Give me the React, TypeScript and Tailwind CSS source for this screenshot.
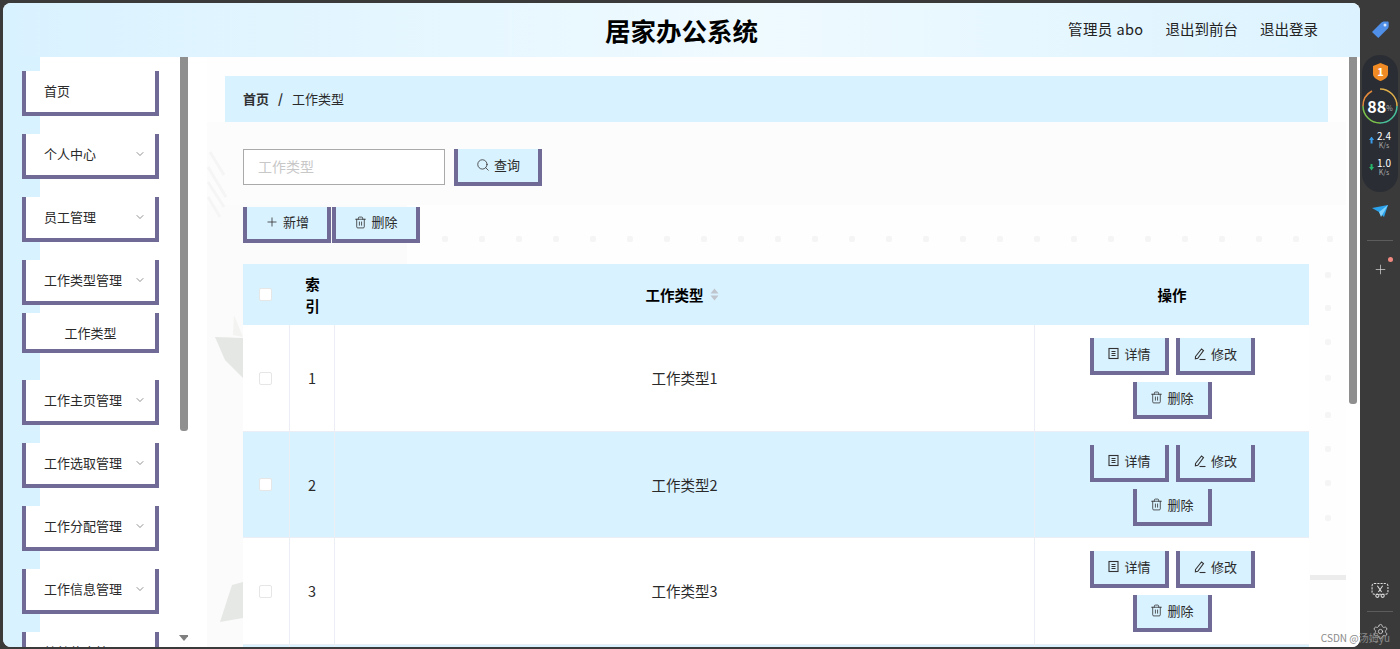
import React from "react";
import { ChevronDown, Plus, Search, Settings, Trash2 } from "lucide-react";

function Tickets() {
  return (
    <svg width="13" height="13" viewBox="0 0 13 13" fill="none" stroke="#333" strokeWidth="1.1">
      <rect x="2" y="1.5" width="9" height="10" />
      <path d="M4.500 4.500h4M4.500 6.500h4M4.500 8.500h4" />
    </svg>
  );
}
function Pencil() {
  return (
    <svg width="14" height="14" viewBox="0 0 14 14" fill="none" stroke="#333" strokeWidth="1.1">
      <path d="M2.500 9.500 8.500 2l2 1.700L4.800 11.300l-2.400.6z" />
      <path d="M6.500 12.500h6" />
    </svg>
  );
}

function ActionButton({ icon, label, className = "w-[79px]" }: { icon: React.ReactNode; label: string; className?: string }) {
  return (
    <button className={`${className} h-[37px] pb-[2px] flex items-center justify-center gap-[4px] bg-[#d9f2ff] border-x-4 border-b-4 border-[#6f6b96] text-[13px] text-[#2a2a2a]`}>
      {icon}
      <span>{label}</span>
    </button>
  );
}

const navItems = [
  { label: "首页", mt: "mt-0", arrow: false },
  { label: "个人中心", mt: "mt-[18px]", arrow: true },
  { label: "员工管理", mt: "mt-[18px]", arrow: true },
  { label: "工作类型管理", mt: "mt-[18px]", arrow: true, sub: "工作类型" },
  { label: "工作主页管理", mt: "mt-[27px]", arrow: true },
  { label: "工作选取管理", mt: "mt-[18px]", arrow: true },
  { label: "工作分配管理", mt: "mt-[18px]", arrow: true },
  { label: "工作信息管理", mt: "mt-[18px]", arrow: true },
  { label: "绩效信息管理", mt: "mt-[18px]", arrow: true },
];

function Sidebar() {
  return (
    <aside className="w-[185px] h-full shrink-0 flex overflow-hidden bg-[linear-gradient(90deg,#d9f2ff_37px,#ffffff_37px)]">
      <nav className="w-[177px] shrink-0 pt-[14px] pl-[19px]">
        {navItems.map((item) => (
          <div key={item.label} className={item.mt}>
            <div className="w-[137px] h-[45px] pb-[2px] flex items-center justify-between bg-white border-x-4 border-b-4 border-[#6f6b96] pl-[18px] pr-[9px] text-[13px] text-[#2a2a2a]">
              <span>{item.label}</span>
              {item.arrow && <ChevronDown size={12} strokeWidth={1.3} color="#555" />}
            </div>
            {item.sub && (
              <div className="mt-[8px] w-[137px] h-[40px] pt-[4px] flex items-center justify-center bg-white border-x-4 border-b-4 border-[#6f6b96] text-[13px] text-[#2a2a2a]">
                {item.sub}
              </div>
            )}
          </div>
        ))}
      </nav>
      <div className="w-[8px] h-full flex flex-col items-center justify-between bg-white">
        <div className="w-[8px] h-[374px] rounded-b-[3px] bg-[#8f8f8f]" />
        <div className="mb-[6px] w-0 h-0 border-x-[5px] border-t-[6px] border-x-transparent border-t-[#7f7f7f]" />
      </div>
    </aside>
  );
}

function Backdrop() {
  const dotsX = [257, 294, 331, 368, 405, 442, 479, 516, 553, 590, 627, 664, 701, 738, 775, 812, 849, 886, 923, 960, 997, 1034, 1071, 1108, 1142];
  const dotsY = [218, 251, 285, 321, 358, 392, 426, 461];
  return (
    <svg className="absolute inset-0 pointer-events-none" width="1161" height="590" viewBox="0 0 1161 590">
      <rect x="19" y="0" width="1139" height="590" fill="#fefefe" />
      <rect x="19" y="65" width="1139" height="83" fill="#fcfcfc" />
      <rect x="19" y="148" width="200" height="60" fill="#fbfbfb" />
      <rect x="19" y="208" width="36" height="382" fill="#fbfbfb" />
      <path d="M22 95 36 118M20 110 38 140M20 125 36 150M20 140 32 160" stroke="#f5f5f5" strokeWidth="3" fill="none" />
      {dotsX.map((x) => (
        <rect key={x} x={x - 3} y={179} width="6" height="6" rx="2" fill="#f5f5f5" />
      ))}
      {dotsY.map((y) => (
        <rect key={y} x={1137} y={y - 3} width="6" height="6" rx="2" fill="#f5f5f5" />
      ))}
      <path d="M46 258 55 280 45 278z" fill="#f3f3f1" />
      <path d="M27 280 55 281 55 321 37 303z" fill="#e4e7e3" />
      <path d="M32 565 55 561 55 525 44 528z" fill="#e6e8e5" />
      <rect x="1122" y="518" width="36" height="5" fill="#ececec" />
    </svg>
  );
}

function Main() {
  const rows = [1, 2, 3, 4];
  return (
    <main className="relative flex-1 h-full overflow-hidden bg-white">
      <Backdrop />
      <div className="relative pt-[19px] pl-[37px]">
        <div className="w-[1103px] h-[46px] pb-[1px] flex items-center gap-[9px] pl-[18px] bg-[#d9f2ff] text-[13px]">
          <span className="font-bold text-[#303133]">首页</span>
          <span className="font-bold text-[#303133]">/</span>
          <span className="text-[#2a2a2a]">工作类型</span>
        </div>
        <div className="pl-[18px]">
          <div className="mt-[27px] flex items-start gap-[9px]">
            <div className="w-[202px] h-[36px] pb-[2px] flex items-center pl-[14px] bg-white border border-[#aaaaaa] text-[14px] text-[#c8c8c8]">
              工作类型
            </div>
            <ActionButton className="w-[88px]" icon={<Search size={14} strokeWidth={1.4} color="#333" />} label="查询" />
          </div>
          <div className="mt-[21px] flex gap-px">
            <ActionButton className="w-[88px] !h-[36px]" icon={<Plus size={14} strokeWidth={1.4} color="#333" />} label="新增" />
            <ActionButton className="w-[88px] !h-[36px]" icon={<Trash2 size={13} strokeWidth={1.5} color="#333" />} label="删除" />
          </div>
          <table className="mt-[21px] w-[1066px] table-fixed border-separate border-spacing-0 bg-white text-[14.5px] text-[#2a2a2a]">
            <colgroup>
              <col className="w-[47px]" />
              <col className="w-[45px]" />
              <col className="w-[700px]" />
              <col className="w-[274px]" />
            </colgroup>
            <thead>
              <tr className="h-[61px] bg-[#d9f2ff] text-black">
                <th className="font-normal pr-[2px]">
                  <span className="block mx-auto w-[13px] h-[13px] rounded-[2px] bg-white border border-[#e6e6e6]" />
                </th>
                <th className="font-bold leading-[22px] px-[14px]">索引</th>
                <th className="font-bold">
                  <span className="inline-flex items-center gap-[6px] pr-[6px]">
                    工作类型
                    <svg width="9" height="13" viewBox="0 0 9 13" fill="#c0c4cc">
                      <path d="M4.500 0.500 8.500 5.500H.5zM4.500 12.500.5 7.500h8z" />
                    </svg>
                  </span>
                </th>
                <th className="font-bold">操作</th>
              </tr>
            </thead>
            <tbody>
              {rows.map((n) => (
                <tr key={n} className={n % 2 === 0 ? "bg-[#d9f2ff] h-[106px]" : "bg-white h-[107px]"}>
                  <td className="border-r border-b border-[#ebeef5] pr-[2px]">
                    <span className="block mx-auto w-[13px] h-[13px] rounded-[2px] bg-white border border-[#e6e6e6]" />
                  </td>
                  <td className="border-r border-b border-[#ebeef5] text-center">{n}</td>
                  <td className="border-r border-b border-[#ebeef5] text-center">工作类型{n}</td>
                  <td className="border-b border-[#ebeef5] align-top pt-[13px]">
                    <div className="flex flex-wrap justify-center gap-x-[7px] gap-y-[7px] px-[40px]">
                      <ActionButton icon={<Tickets />} label="详情" />
                      <ActionButton icon={<Pencil />} label="修改" />
                      <ActionButton icon={<Trash2 size={13} strokeWidth={1.5} color="#333" />} label="删除" />
                    </div>
                  </td>
                </tr>
              ))}
            </tbody>
          </table>
        </div>
      </div>
      <div className="absolute right-[3px] top-0 w-[8px] h-[347px] rounded-b-[3px] bg-[#8f8f8f]" />
    </main>
  );
}

function Dock() {
  return (
    <div className="flex-1 h-full flex flex-col items-center text-white">
      <svg className="mt-[18px]" width="18" height="18" viewBox="0 0 18 18">
        <path d="M1 11 10 2c1-1 2-1.500 3.500-1.500h3c.8 0 1.200.5 1.200 1.200v3c0 1.400-.4 2.400-1.400 3.400l-9 9z" fill="#4f8fe8" />
        <circle cx="14" cy="4" r="1.500" fill="#dbe9ff" />
      </svg>
      <div className="mt-[16px] w-[36px] h-[137px] rounded-[18px] bg-[#2a2d33] flex flex-col items-center">
        <svg className="mt-[8px]" width="15" height="18" viewBox="0 0 15 18">
          <path d="M7.500 0 15 3v8c0 3.500-3.500 5.500-7.500 7C3.500 16.500 0 14.500 0 11V3z" fill="#f08a24" />
          <text x="7.500" y="13" textAnchor="middle" fontSize="11" fontWeight="700" fill="#fff">1</text>
        </svg>
        <div className="relative mt-[7px] w-[36px] h-[36px]">
          <svg width="36" height="36" viewBox="0 0 36 36" fill="none" strokeWidth="1.500">
            <path d="M18 1a17 17 0 0 1 17 17" stroke="#e2b04a" />
            <path d="M35 18a17 17 0 0 1-17 17" stroke="#49c19a" />
            <path d="M18 35A17 17 0 0 1 1 18" stroke="#7bc24d" />
            <path d="M1 18A17 17 0 0 1 10 3" stroke="#e58a3a" />
          </svg>
          <div className="absolute inset-0 flex items-center justify-center font-bold text-[16px] leading-none">
            88<span className="text-[7px] font-normal text-[#aaa] mt-[4px]">%</span>
          </div>
        </div>
        <div className="mt-[6px] flex items-center gap-[3px]">
          <div className="w-[5px] h-[7px] bg-[#3a9be8] [clip-path:polygon(50%_0,100%_50%,70%_50%,70%_100%,30%_100%,30%_50%,0_50%)]" />
          <div className="flex flex-col items-center text-[10px] leading-[11px]">
            <span>2.4</span>
            <span className="text-[7px] leading-[9px] text-[#aaa]">K/s</span>
          </div>
        </div>
        <div className="mt-[7px] flex items-center gap-[3px]">
          <div className="w-[5px] h-[7px] bg-[#26b56a] [clip-path:polygon(30%_0,70%_0,70%_50%,100%_50%,50%_100%,0_50%,30%_50%)]" />
          <div className="flex flex-col items-center text-[10px] leading-[11px]">
            <span>1.0</span>
            <span className="text-[7px] leading-[9px] text-[#aaa]">K/s</span>
          </div>
        </div>
      </div>
      <svg className="mt-[13px]" width="16" height="13" viewBox="0 0 16 13">
        <path d="M0 3 16 0 12 12 7 7z" fill="#2ba3ec" />
        <path d="M7 7 16 0 9 12z" fill="#7fd0fa" />
      </svg>
      <div className="mt-[22px] w-[26px] h-px bg-[#5c5c5c]" />
      <div className="relative mt-[21px]">
        <Plus size={15} strokeWidth={1.100} color="#dddddd" />
        <div className="absolute -top-[5px] -right-[5px] w-[5px] h-[5px] rounded-full bg-[#f08a80]" />
      </div>
      <svg className="mt-[305px]" width="18" height="18" viewBox="0 0 17 16" fill="none" stroke="#dddddd" strokeWidth="1">
        <rect x="1" y="1" width="15" height="10" rx="2" strokeDasharray="2 1" />
        <path d="M6 3l4 6M11 3 7 9" />
        <circle cx="6" cy="12.500" r="1.500" />
        <circle cx="11" cy="12.500" r="1.500" />
      </svg>
      <div className="mt-[11px] w-[26px] h-px bg-[#5c5c5c]" />
      <Settings className="mt-[11px]" size={17} strokeWidth={1.100} color="#dddddd" />
    </div>
  );
}

export default function App() {
  return (
    <div className="relative w-[1400px] h-[649px] overflow-hidden flex pt-[3px] pl-[3px] pb-[2px] bg-[#3a3a3a] font-['Noto_Sans_CJK_SC','Noto_Sans',sans-serif]">
      <div className="w-[1357px] h-[644px] shrink-0 rounded-[8px] overflow-hidden flex flex-col bg-white">
        <header className="relative h-[54px] shrink-0 pb-[2px] flex items-center justify-end gap-[22px] pr-[42px] bg-[linear-gradient(90deg,#d9f2ff,#effaff_55%,#dcf3ff)] text-[14.5px] text-[#222]">
          <div className="absolute left-[602px] top-[8px] text-[25.5px] leading-[38px] font-bold text-black">居家办公系统</div>
          <span className="tracking-[0.4px]">管理员 abo</span>
          <span>退出到前台</span>
          <span>退出登录</span>
        </header>
        <div className="flex flex-1 min-h-0">
          <Sidebar />
          <Main />
        </div>
      </div>
      <Dock />
      <div className="absolute right-[10px] bottom-[4px] text-[10px] leading-[14px] text-[#8a8a8a]">CSDN @汤姆yu</div>
    </div>
  );
}
